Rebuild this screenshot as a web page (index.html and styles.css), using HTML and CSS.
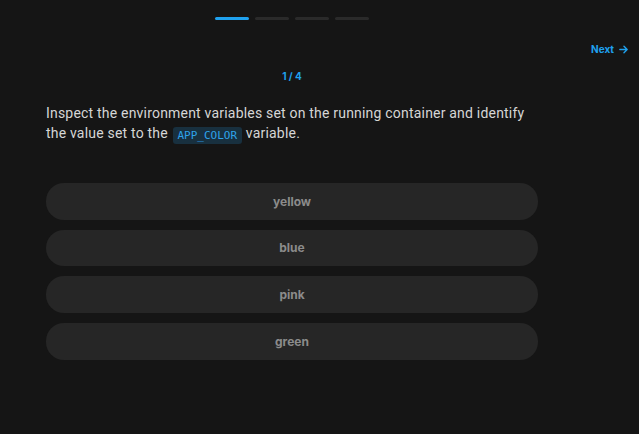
FILE: index.html
```html
<!DOCTYPE html>
<html>
<head>
<meta charset="utf-8">
<link rel="stylesheet" href="styles.css">
</head>
<body>
<div class="page">
  <div class="progress-wrap">
    <div class="progress">
      <span class="seg active"></span>
      <span class="seg"></span>
      <span class="seg"></span>
      <span class="seg"></span>
    </div>
  </div>
  <div class="nav">
    <a class="next">Next
      <svg width="11" height="11" viewBox="0 0 12 12" fill="none" stroke="currentColor" stroke-width="1.5" stroke-linecap="round" stroke-linejoin="round"><path d="M2 6h8M6.5 2.5 10 6l-3.5 3.5"/></svg>
    </a>
  </div>
  <div class="quiz">
    <div class="count">1 / 4</div>
    <p class="question">Inspect the environment variables set on the running container and identify the value set to the <code class="code">APP_COLOR</code> variable.</p>
    <div class="options">
      <button class="option">yellow</button>
      <button class="option">blue</button>
      <button class="option">pink</button>
      <button class="option">green</button>
    </div>
  </div>
</div>
</body>
</html>
```
FILE: styles.css
```css
html, body {
  margin: 0;
  padding: 0;
  background: #151515;
  height: 100%;
}
body {
  font-family: Inter, "Noto Sans", sans-serif;
}
.page {
  padding-top: 17px;
}
.progress-wrap {
  width: 492px;
  margin-left: 46px;
  display: flex;
  justify-content: center;
}
.progress {
  display: flex;
  gap: 6px;
}
.seg {
  width: 34px;
  height: 3px;
  border-radius: 2px;
  background: #2a2a2a;
}
.seg.active {
  background: #1fa1ee;
}
.nav {
  display: flex;
  justify-content: flex-end;
  padding-right: 10px;
  margin-top: 23px;
}
.next {
  color: #1fa1ee;
  font-size: 10px;
  font-weight: 700;
  display: flex;
  align-items: center;
  gap: 4px;
}
.quiz {
  width: 492px;
  margin-left: 46px;
}
.count {
  text-align: center;
  color: #1fa1ee;
  font-size: 10px;
  font-weight: 700;
  margin-top: 15px;
}
.question {
  font-family: Roboto, "Noto Sans", sans-serif;
  color: #d6d6d6;
  font-size: 14px;
  letter-spacing: 0.2px;
  line-height: 20px;
  margin: 21px 0 0;
}
.code {
  display: inline-block;
  font-family: "DejaVu Sans Mono", monospace;
  font-size: 11px;
  line-height: 17px;
  letter-spacing: 0;
  color: #2ea3ea;
  background: #18303f;
  padding: 0 5px;
  margin-left: 1px;
  border-radius: 3px;
  vertical-align: -1px;
}
.options {
  margin-top: 39px;
  display: flex;
  flex-direction: column;
  gap: 10px;
}
.option {
  height: 36.67px;
  border: none;
  border-radius: 18px;
  background: #262626;
  color: #8b8b8b;
  font-family: Inter, "Noto Sans", sans-serif;
  font-size: 12px;
  font-weight: 700;
  padding: 0;
}
```
